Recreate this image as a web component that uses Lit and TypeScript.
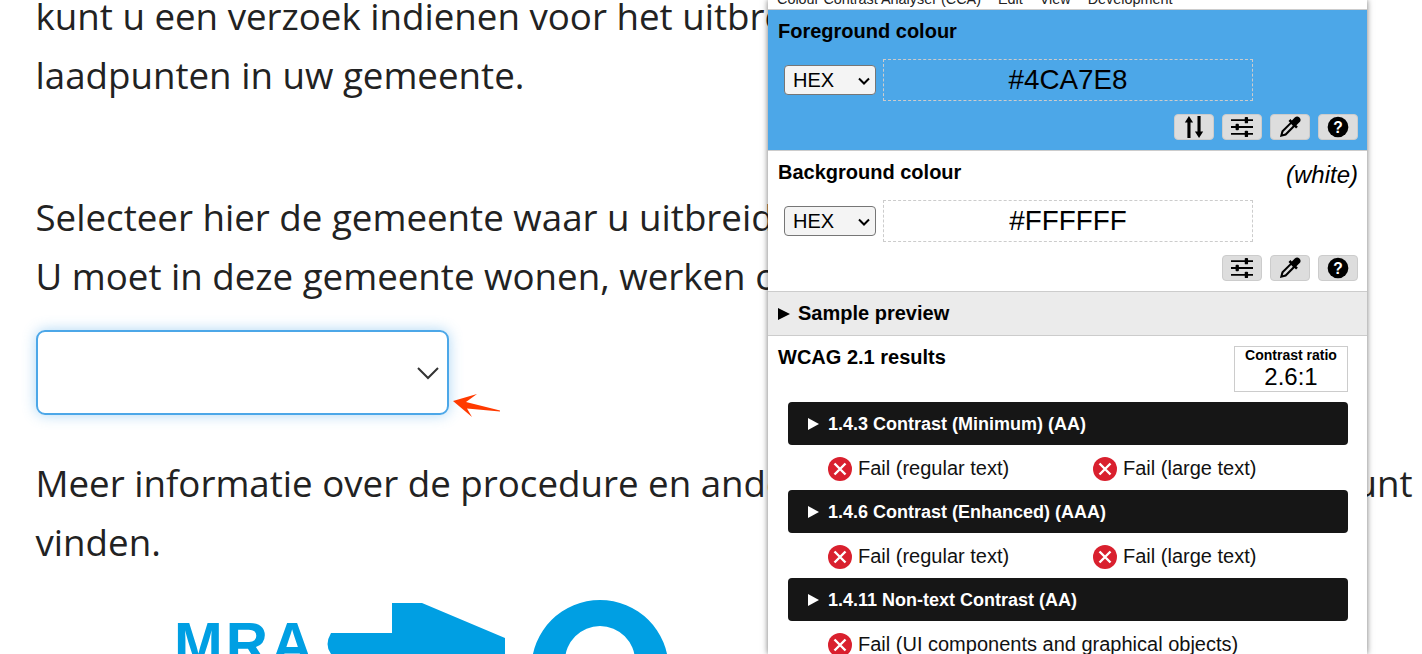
import { LitElement, html, css, svg } from "lit";
import { customElement } from "lit/decorators.js";

const tune = svg`<g stroke="#000" stroke-width="2" fill="none"><path d="M0 4.500h24M0 12h24M0 19.500h24"/></g><g fill="#000"><rect x="15" y="1" width="3.600" height="7" rx="1"/><rect x="5" y="8.500" width="3.600" height="7" rx="1"/><rect x="15" y="16" width="3.600" height="7" rx="1"/></g>`;
const drop = svg`<path fill="#000" d="M22.300 1.700a3.600 3.600 0 0 0-5.100 0l-3.200 3.200-1.600-1.500-2 2 1.600 1.600L2.800 16.200 1 23l6.800-1.800 9.200-9.200 1.600 1.600 2-2-1.600-1.600 3.300-3.200a3.600 3.600 0 0 0 0-5.100zM6.700 19l-2.600.8.800-2.600 8.400-8.400 1.800 1.800z"/>`;
const help = svg`<circle cx="12" cy="12" r="11.300" fill="#000"/><text x="12" y="18.200" text-anchor="middle" font-family="Liberation Sans" font-weight="700" font-size="17" fill="#fff">?</text>`;
const swap = svg`<g fill="#000"><path d="M6.500 0l4.500 7H8.200v17H4.800V7H2z"/><path d="M17.500 24 13 17h2.800V0h3.400v17H22z"/></g>`;

@customElement("app-root")
export class AppRoot extends LitElement {
  static styles = css`
    :host { display: block; height: 654px; overflow: hidden; background: #fff; position: relative; }
    .page { font-family: "Open Sans", "Noto Sans", sans-serif; font-size: 36.7px; line-height: 59px; color: #222; padding: 0 0 0 35.5px; white-space: nowrap; margin-top: -13px; }
    .page p { margin: 0; }
    .page p.spread { display: flex; justify-content: space-between; width: 1377px; }
    .gap1 { height: 83px; }
    .sel { height: 81px; margin: 24px 0 39px; border: 2px solid #4ca7e8; border-radius: 9px; box-shadow: 0 0 14px rgba(76,167,232,.45); display: flex; align-items: center; justify-content: flex-end; padding-right: 7px; box-sizing: content-box; width: 402px; }
    .sel svg { display: block; margin-top: 1px; }
    .mra { position: absolute; left: 174px; top: 615px; font: 700 58.500px/1 "Liberation Sans", sans-serif; letter-spacing: 3px; color: #009fe3; }
    .arrow { position: absolute; left: 450px; top: 390px; }
    .logo-art { position: absolute; left: 320px; top: 595px; }

    .panel { position: absolute; left: 768px; top: 0; width: 599px; height: 654px; background: #fff; box-shadow: 0 0 6px rgba(0,0,0,.55); font-family: "Liberation Sans", Arial, sans-serif; color: #000; overflow: hidden; }
    .menu { height: 9px; font-size: 14.400px; overflow: hidden; white-space: nowrap; padding-left: 9px; color: #222; border-bottom: 1px solid #ccc; }
    .menu div { display: flex; gap: 17px; margin-top: -9px; line-height: 16px; }
    .section { box-sizing: border-box; padding: 10px 9px 0 10px; position: relative; height: 141px; border-bottom: 1px solid #ccc; }
    .fg { background: #4ca7e8; }
    .head { display: flex; justify-content: space-between; height: 22px; font-size: 20px; font-weight: 700; line-height: 22px; }
    .head i { font-weight: 400; font-size: 24px; line-height: 26px; margin-top: 1px; }
    .row { display: flex; align-items: center; margin: 17px 0 0 6px; height: 42px; gap: 7px; }
    .select { width: 92px; height: 30px; box-sizing: border-box; background: #f4f4f4; border: 1px solid #767676; border-radius: 4px; font-size: 20px; line-height: 28px; padding-left: 8px; position: relative; }
    .select svg { position: absolute; right: 5px; top: 11px; }
    .input { width: 370px; height: 42px; box-sizing: border-box; border: 1px dashed #ccc; text-align: center; font-size: 27.800px; line-height: 40px; }
    .btns { display: flex; justify-content: flex-end; gap: 8px; margin-top: 13px; }
    .btns span { width: 40px; height: 26px; background: #ddd; border: 1px solid #ccc; box-sizing: border-box; border-radius: 4px; display: flex; align-items: center; justify-content: center; }
    .btns svg { width: 22px; height: 22px; display: block; }
    .sample { height: 44px; box-sizing: border-box; background: #ebebeb; border-bottom: 1px solid #ccc; display: flex; align-items: center; padding-left: 10px; gap: 8px; font-weight: 700; font-size: 20px; }
    .tri { width: 0; height: 0; border-left: 12px solid #000; border-top: 6px solid transparent; border-bottom: 6px solid transparent; }
    .results { padding: 0 19px 0 20px; }
    .rh { display: flex; justify-content: space-between; margin: 0 0 10px -10px; height: 56px; }
    .rh > b { font-size: 20px; line-height: 22px; margin-top: 10px; }
    .ratio { width: 114px; height: 46px; box-sizing: border-box; border: 1px solid #ccc; margin-top: 10px; text-align: center; }
    .ratio b { display: block; font-size: 14px; line-height: 14px; margin: 1px 0 1px; }
    .ratio span { display: block; font-size: 24px; line-height: 27px; }
    .bar { height: 43px; box-sizing: border-box; padding: 1px 0 0 20px; background: #161616; color: #fff; border-radius: 4px; display: flex; align-items: center; gap: 9px; font-weight: 700; font-size: 18px; }
    .bar .tri { border-left: 11px solid #fff; border-top-width: 6px; border-bottom-width: 6px; }
    .fails { height: 45px; box-sizing: border-box; padding: 2px 0 0 40px; display: flex; align-items: center; font-size: 20px; color: #111; white-space: nowrap; }
    .fail { display: flex; align-items: center; gap: 6px; flex: 0 0 265px; }
    .fail svg { display: block; flex: none; }
  `;

  private fail(t: string) {
    return html`<span class="fail"><svg width="24" height="24" viewBox="0 0 24 24"><circle cx="12" cy="12" r="12" fill="#d9202e"/><path d="M6.500 6.500l11 11M17.500 6.500l-11 11" stroke="#fff" stroke-width="2.400"/></svg>${t}</span>`;
  }
  private icon(c: unknown) {
    return html`<span><svg viewBox="0 0 24 24">${c}</svg></span>`;
  }
  private selectBox() {
    return html`<div class="select">HEX<svg width="12" height="8" viewBox="0 0 12 8"><path d="M1 1.500l5 5 5-5" fill="none" stroke="#000" stroke-width="2"/></svg></div>`;
  }

  render() {
    return html`
      <div class="page">
        <p>kunt u een verzoek indienen voor het uitbreiden van het aantal</p>
        <p>laadpunten in uw gemeente.</p>
        <div class="gap1"></div>
        <p>Selecteer hier de gemeente waar u uitbreiding wenst.</p>
        <p>U moet in deze gemeente wonen, werken of parkeren.</p>
        <div class="sel"><svg width="24" height="14" viewBox="0 0 24 14"><path d="M2 2l10 10L22 2" fill="none" stroke="#333" stroke-width="2"/></svg></div>
        <p class="spread"><span>Meer informatie over de procedure en andere mogelijkheden</span><span>kunt</span></p>
        <p>vinden.</p>
      </div>
      <svg class="arrow" width="54" height="30" viewBox="450 390 54 30"><path d="M453 401 477 394 466 402 500 410.500V411.500L467 408.500 472 417Z" fill="#ff3a00"/></svg>
      <svg class="logo-art" width="360" height="59" viewBox="320 595 360 59"><path d="M331 633H392V603H422L505 638V654H331Q324 645 331 633Z" fill="#009fe3"/><path fill-rule="evenodd" fill="#009fe3" d="M531.400 668.600a68.600 68.600 0 1 1 137.200 0a68.600 68.600 0 1 1-137.200 0zM565 661a35 35 0 1 0 70 0a35 35 0 1 0-70 0z"/></svg>
      <div class="mra">MRA</div>

      <div class="panel">
        <div class="menu"><div><span>Colour Contrast Analyser (CCA)</span><span>Edit</span><span>View</span><span>Development</span></div></div>
        <div class="section fg">
          <div class="head">Foreground colour</div>
          <div class="row">${this.selectBox()}<div class="input">#4CA7E8</div></div>
          <div class="btns">${this.icon(swap)}${this.icon(tune)}${this.icon(drop)}${this.icon(help)}</div>
        </div>
        <div class="section">
          <div class="head">Background colour<i>(white)</i></div>
          <div class="row">${this.selectBox()}<div class="input">#FFFFFF</div></div>
          <div class="btns">${this.icon(tune)}${this.icon(drop)}${this.icon(help)}</div>
        </div>
        <div class="sample"><span class="tri"></span>Sample preview</div>
        <div class="results">
          <div class="rh"><b>WCAG 2.1 results</b><div class="ratio"><b>Contrast ratio</b><span>2.6:1</span></div></div>
          <div class="bar"><span class="tri"></span>1.4.3 Contrast (Minimum) (AA)</div>
          <div class="fails">${this.fail("Fail (regular text)")}${this.fail("Fail (large text)")}</div>
          <div class="bar"><span class="tri"></span>1.4.6 Contrast (Enhanced) (AAA)</div>
          <div class="fails">${this.fail("Fail (regular text)")}${this.fail("Fail (large text)")}</div>
          <div class="bar"><span class="tri"></span>1.4.11 Non-text Contrast (AA)</div>
          <div class="fails">${this.fail("Fail (UI components and graphical objects)")}</div>
        </div>
      </div>
    `;
  }
}
